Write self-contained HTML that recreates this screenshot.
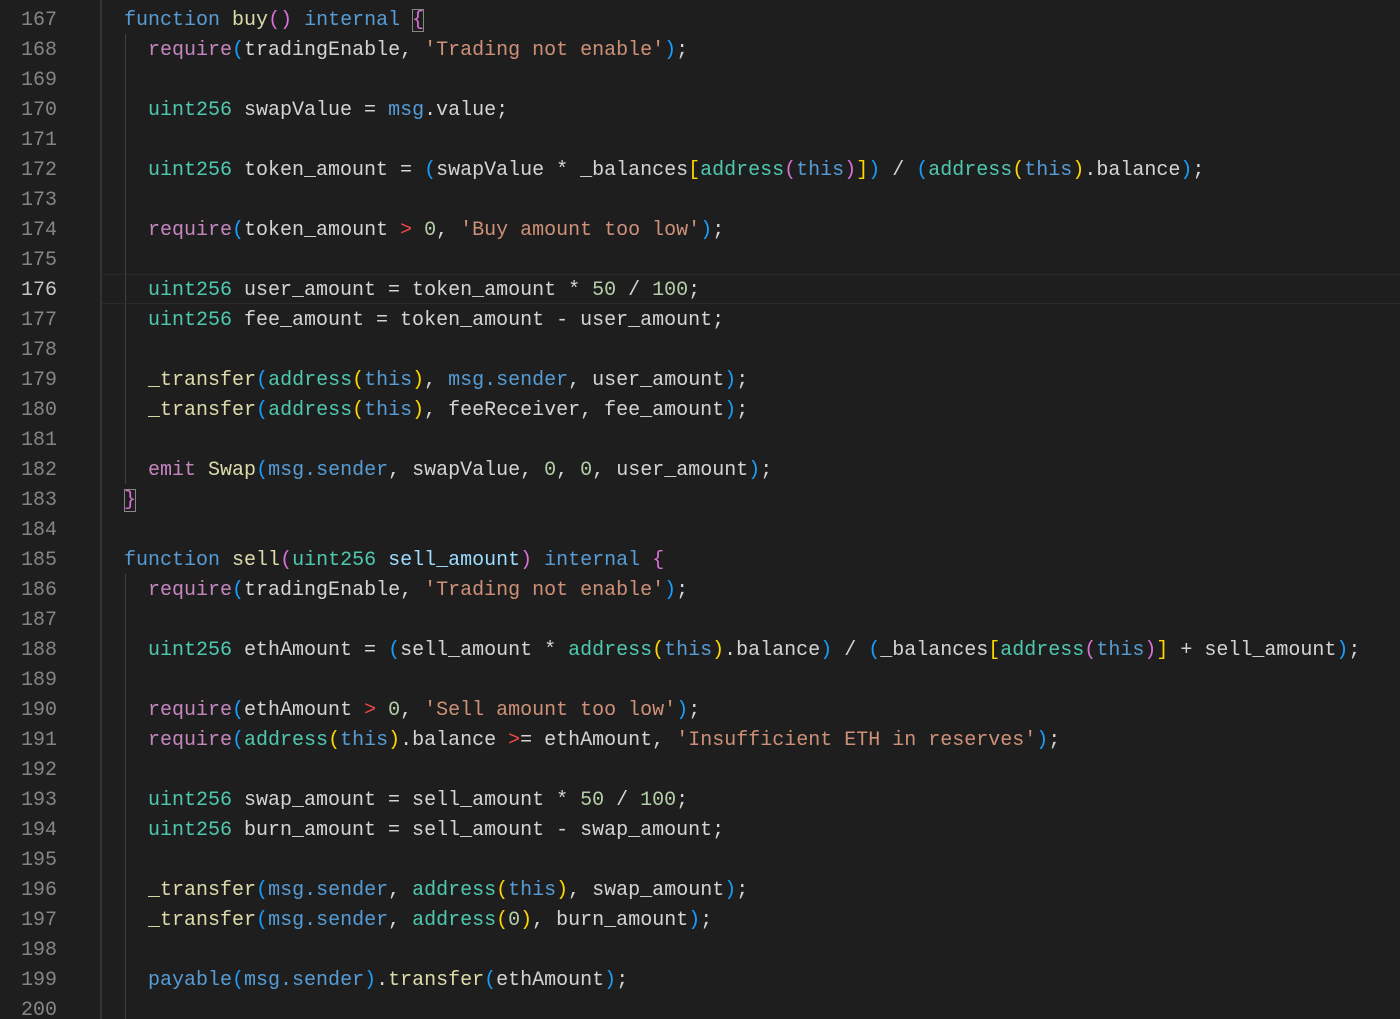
<!DOCTYPE html>
<html><head><meta charset="utf-8"><style>
html,body{margin:0;padding:0;background:#1e1e1e;width:1400px;height:1019px;overflow:hidden}
.ed{position:relative;width:1400px;height:1019px;font-family:"Liberation Mono",monospace;font-size:20px;color:#d4d4d4}
.ln{position:absolute;left:0;width:57px;text-align:right;color:#858585;height:30px;line-height:30px;margin-top:2px}
.ln.a{color:#c6c6c6}
.cl{position:absolute;left:100px;height:30px;line-height:30px;white-space:pre;margin-top:2px}
.gut{position:absolute;left:100px;top:0;width:2px;height:1019px;background:#333}
.ig{position:absolute;left:125px;width:1px;background:#404040}
.act{position:absolute;left:102px;right:0;top:274px;height:28px;border-top:1px solid #2a2a2a;border-bottom:1px solid #2a2a2a}
.k{color:#569cd6}.f{color:#dcdcaa}.t{color:#4ec9b0}.s{color:#ce9178}.c{color:#c586c0}.n{color:#b5cea8}
.r{color:#f44747}.g{color:#ffd700}.p{color:#da70d6}.b{color:#179fff}
.box{outline:1px solid #888;outline-offset:-1px}
</style></head><body><div class="ed">
<div class="gut"></div>
<div class="ig" style="top:34px;height:450px"></div>
<div class="ig" style="top:574px;height:445px"></div>
<div class="act"></div>
<div class="ln" style="top:4px">167</div><div class="cl" style="top:4px">  <span class="k">function</span> <span class="f">buy</span><span class="p">()</span> <span class="k">internal</span> <span class="p box">{</span></div>
<div class="ln" style="top:34px">168</div><div class="cl" style="top:34px">    <span class="c">require</span><span class="b">(</span>tradingEnable, <span class="s">'Trading not enable'</span><span class="b">)</span>;</div>
<div class="ln" style="top:64px">169</div>
<div class="ln" style="top:94px">170</div><div class="cl" style="top:94px">    <span class="t">uint256</span> swapValue = <span class="k">msg</span>.value;</div>
<div class="ln" style="top:124px">171</div>
<div class="ln" style="top:154px">172</div><div class="cl" style="top:154px">    <span class="t">uint256</span> token_amount = <span class="b">(</span>swapValue * _balances<span class="g">[</span><span class="t">address</span><span class="p">(</span><span class="k">this</span><span class="p">)</span><span class="g">]</span><span class="b">)</span> / <span class="b">(</span><span class="t">address</span><span class="g">(</span><span class="k">this</span><span class="g">)</span>.balance<span class="b">)</span>;</div>
<div class="ln" style="top:184px">173</div>
<div class="ln" style="top:214px">174</div><div class="cl" style="top:214px">    <span class="c">require</span><span class="b">(</span>token_amount <span class="r">&gt;</span> <span class="n">0</span>, <span class="s">'Buy amount too low'</span><span class="b">)</span>;</div>
<div class="ln" style="top:244px">175</div>
<div class="ln a" style="top:274px">176</div><div class="cl" style="top:274px">    <span class="t">uint256</span> user_amount = token_amount * <span class="n">50</span> / <span class="n">100</span>;</div>
<div class="ln" style="top:304px">177</div><div class="cl" style="top:304px">    <span class="t">uint256</span> fee_amount = token_amount - user_amount;</div>
<div class="ln" style="top:334px">178</div>
<div class="ln" style="top:364px">179</div><div class="cl" style="top:364px">    <span class="f">_transfer</span><span class="b">(</span><span class="t">address</span><span class="g">(</span><span class="k">this</span><span class="g">)</span>, <span class="k">msg.sender</span>, user_amount<span class="b">)</span>;</div>
<div class="ln" style="top:394px">180</div><div class="cl" style="top:394px">    <span class="f">_transfer</span><span class="b">(</span><span class="t">address</span><span class="g">(</span><span class="k">this</span><span class="g">)</span>, feeReceiver, fee_amount<span class="b">)</span>;</div>
<div class="ln" style="top:424px">181</div>
<div class="ln" style="top:454px">182</div><div class="cl" style="top:454px">    <span class="c">emit</span> <span class="f">Swap</span><span class="b">(</span><span class="k">msg.sender</span>, swapValue, <span class="n">0</span>, <span class="n">0</span>, user_amount<span class="b">)</span>;</div>
<div class="ln" style="top:484px">183</div><div class="cl" style="top:484px">  <span class="p box">}</span></div>
<div class="ln" style="top:514px">184</div>
<div class="ln" style="top:544px">185</div><div class="cl" style="top:544px">  <span class="k">function</span> <span class="f">sell</span><span class="p">(</span><span class="t">uint256</span> <span style="color:#9cdcfe">sell_amount</span><span class="p">)</span> <span class="k">internal</span> <span class="p">{</span></div>
<div class="ln" style="top:574px">186</div><div class="cl" style="top:574px">    <span class="c">require</span><span class="b">(</span>tradingEnable, <span class="s">'Trading not enable'</span><span class="b">)</span>;</div>
<div class="ln" style="top:604px">187</div>
<div class="ln" style="top:634px">188</div><div class="cl" style="top:634px">    <span class="t">uint256</span> ethAmount = <span class="b">(</span>sell_amount * <span class="t">address</span><span class="g">(</span><span class="k">this</span><span class="g">)</span>.balance<span class="b">)</span> / <span class="b">(</span>_balances<span class="g">[</span><span class="t">address</span><span class="p">(</span><span class="k">this</span><span class="p">)</span><span class="g">]</span> + sell_amount<span class="b">)</span>;</div>
<div class="ln" style="top:664px">189</div>
<div class="ln" style="top:694px">190</div><div class="cl" style="top:694px">    <span class="c">require</span><span class="b">(</span>ethAmount <span class="r">&gt;</span> <span class="n">0</span>, <span class="s">'Sell amount too low'</span><span class="b">)</span>;</div>
<div class="ln" style="top:724px">191</div><div class="cl" style="top:724px">    <span class="c">require</span><span class="b">(</span><span class="t">address</span><span class="g">(</span><span class="k">this</span><span class="g">)</span>.balance <span class="r">&gt;</span>= ethAmount, <span class="s">'Insufficient ETH in reserves'</span><span class="b">)</span>;</div>
<div class="ln" style="top:754px">192</div>
<div class="ln" style="top:784px">193</div><div class="cl" style="top:784px">    <span class="t">uint256</span> swap_amount = sell_amount * <span class="n">50</span> / <span class="n">100</span>;</div>
<div class="ln" style="top:814px">194</div><div class="cl" style="top:814px">    <span class="t">uint256</span> burn_amount = sell_amount - swap_amount;</div>
<div class="ln" style="top:844px">195</div>
<div class="ln" style="top:874px">196</div><div class="cl" style="top:874px">    <span class="f">_transfer</span><span class="b">(</span><span class="k">msg.sender</span>, <span class="t">address</span><span class="g">(</span><span class="k">this</span><span class="g">)</span>, swap_amount<span class="b">)</span>;</div>
<div class="ln" style="top:904px">197</div><div class="cl" style="top:904px">    <span class="f">_transfer</span><span class="b">(</span><span class="k">msg.sender</span>, <span class="t">address</span><span class="g">(</span><span class="n">0</span><span class="g">)</span>, burn_amount<span class="b">)</span>;</div>
<div class="ln" style="top:934px">198</div>
<div class="ln" style="top:964px">199</div><div class="cl" style="top:964px">    <span class="k">payable</span><span class="b">(</span><span class="k">msg.sender</span><span class="b">)</span>.<span class="f">transfer</span><span class="b">(</span>ethAmount<span class="b">)</span>;</div>
<div class="ln" style="top:994px">200</div>
</div></body></html>
